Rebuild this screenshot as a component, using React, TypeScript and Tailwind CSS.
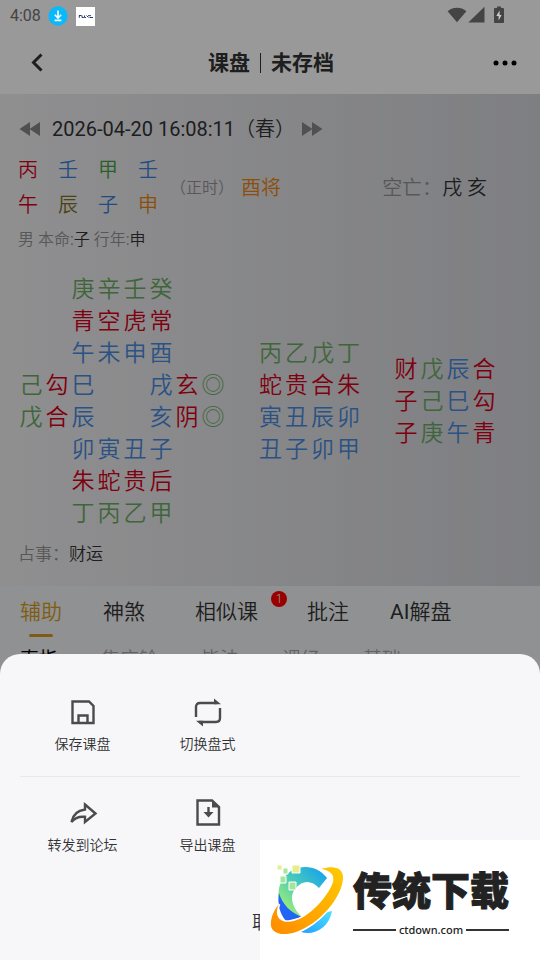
import { ReactNode } from "react";

const tone: Record<string, string> = {
  g: "text-[#6aab62]",
  r: "text-[#d4001a]",
  b: "text-[#4689dc]",
};

type Cell = [string, string];

const plate: Cell[][] = [
  [["", ""], ["", ""], ["庚", "g"], ["辛", "g"], ["壬", "g"], ["癸", "g"]],
  [["", ""], ["", ""], ["青", "r"], ["空", "r"], ["虎", "r"], ["常", "r"]],
  [["", ""], ["", ""], ["午", "b"], ["未", "b"], ["申", "b"], ["酉", "b"]],
  [["己", "g"], ["勾", "r"], ["巳", "b"], ["", ""], ["", ""], ["戌", "b"], ["玄", "r"], ["◎", "g"]],
  [["戊", "g"], ["合", "r"], ["辰", "b"], ["", ""], ["", ""], ["亥", "b"], ["阴", "r"], ["◎", "g"]],
  [["", ""], ["", ""], ["卯", "b"], ["寅", "b"], ["丑", "b"], ["子", "b"]],
  [["", ""], ["", ""], ["朱", "r"], ["蛇", "r"], ["贵", "r"], ["后", "r"]],
  [["", ""], ["", ""], ["丁", "g"], ["丙", "g"], ["乙", "g"], ["甲", "g"]],
];

const lessons: Cell[][] = [
  [["丙", "g"], ["乙", "g"], ["戊", "g"], ["丁", "g"]],
  [["蛇", "r"], ["贵", "r"], ["合", "r"], ["朱", "r"]],
  [["寅", "b"], ["丑", "b"], ["辰", "b"], ["卯", "b"]],
  [["丑", "b"], ["子", "b"], ["卯", "b"], ["甲", "b"]],
];

const passes: Cell[][] = [
  [["财", "r"], ["戊", "g"], ["辰", "b"], ["合", "r"]],
  [["子", "r"], ["己", "g"], ["巳", "b"], ["勾", "r"]],
  [["子", "r"], ["庚", "g"], ["午", "b"], ["青", "r"]],
];

const pillars = [
  { text: "丙", color: "text-[#d4001a]" },
  { text: "壬", color: "text-[#367fd8]" },
  { text: "甲", color: "text-[#46a044]" },
  { text: "壬", color: "text-[#367fd8]" },
  { text: "午", color: "text-[#d4001a]" },
  { text: "辰", color: "text-[#80701c]" },
  { text: "子", color: "text-[#367fd8]" },
  { text: "申", color: "text-[#e88410]" },
];

function Grid({ rows }: { rows: Cell[][] }) {
  return (
    <div className="text-[23px] leading-8">
      {rows.map((row, i) => (
        <div key={i} className="flex h-8">
          {row.map(([text, color], j) => (
            <span key={j} className={`w-[26px] text-center ${tone[color] ?? ""}`}>
              {text}
            </span>
          ))}
        </div>
      ))}
    </div>
  );
}

function StatusBar() {
  return (
    <div className="absolute inset-x-0 top-0 z-20 flex h-8 items-center pl-[10px] pr-[35px] font-normal text-[#444]">
      <span className="text-base">4:08</span>
      <svg className="ml-[7px] size-5" viewBox="0 0 20 20">
        <circle cx="10" cy="10" r="9.7" fill="#08b9fb" />
        <path d="M10 4.5v7M6.8 8.8l3.2 3.2 3.2-3.2M6.6 14.4h6.8" fill="none" stroke="#fff" strokeWidth="1.6" />
      </svg>
      <svg className="ml-2 size-[19px]" viewBox="0 0 19 19">
        <path d="M0 0h19v19H0z" fill="#fff" />
        <path d="M3 8.500h2.500M3.300 8.500v2.300M6 8.500v2h1.800M8.500 8.500v2h1.500M10.500 8.500l2 2M12 8.700h3M13.500 10.500h3.500" fill="none" stroke="#203b70" strokeWidth="1" />
      </svg>
      <div className="ml-auto flex items-center">
        <svg className="h-5 w-5" viewBox="0 0 20 20" fill="currentColor">
          <path d="M.6 5.200C6 .6 14 .6 19.400 5.200L10 16.200z" />
        </svg>
        <svg className="h-5 w-5" viewBox="0 0 20 20" fill="currentColor">
          <path d="M17.500 .8v15.700H1.300z" />
        </svg>
        <svg className="ml-1 h-5 w-[14px]" viewBox="0 0 14 20" fill="currentColor">
          <path d="M6 .5h4v1.500h2q1 0 1 1V16q0 1-1 1H4q-1 0-1-1V3q0-1 1-1h2z" />
          <path d="M8.600 4.500l-3.300 5.500h2.300v4.500L10.600 9H8.600z" fill="#ccc" />
        </svg>
      </div>
    </div>
  );
}

function Action({ label, children }: { label: string; children: ReactNode }) {
  return (
    <button className="flex flex-col items-center gap-1.5 text-[#4b4b4d]">
      <svg className="size-8" viewBox="0 0 32 32" fill="none" stroke="currentColor" strokeWidth="2.400">
        {children}
      </svg>
      <span className="text-sm leading-5 text-[#333]">{label}</span>
    </button>
  );
}

function Logo() {
  return (
    <svg className="h-[76px] w-[76px] shrink-0" viewBox="0 0 76 76">
      <defs>
        <linearGradient id="arc" x1="0" y1="1" x2="1" y2="0">
          <stop offset="0.1" stopColor="#a8f36d" />
          <stop offset=".5" stopColor="#4bcbb8" />
          <stop offset="1" stopColor="#0e9df5" />
        </linearGradient>
        <linearGradient id="ring" x1="0" y1="1" x2="1" y2="0">
          <stop offset="0" stopColor="#ff8a00" />
          <stop offset="1" stopColor="#ffcb00" />
        </linearGradient>
        <linearGradient id="tail" x1="0" y1="1" x2="1" y2="0">
          <stop offset="0" stopColor="#1fa0ff" />
          <stop offset="1" stopColor="#4de0ff" />
        </linearGradient>
      </defs>
      <path d="M58 16C49 4 34 2 22 9C12 15 8 27 10 36C13 48 21 55 33 55C24 47 19 34 27 26C33 18 43 18 50 26z" fill="url(#arc)" />
      <path d="M10 31C8 42 11 52 17 59L33 55C22 51 13 42 10 31z" fill="#2264f5" />
      <path d="M32 70C45 74 60 66 63 49C56 50 52 54 48 59C43 64 38 67 32 70z" fill="url(#tail)" />
      <path
        d="M52 7C64 3 75 5 74 17C72 37 50 62 27 70C12 75 0 71 2 59C3 52 6 47 10 42C6 50 8 57 14 59C31 65 58 38 64 20C66 13 61 8 52 7z"
        fill="url(#ring)"
        stroke="#fff"
        strokeWidth="3"
        paintOrder="stroke"
      />
      <g stroke="#fff" strokeWidth="1">
        <path d="M23 3h8v8h-8z" fill="#e6ed8d" />
        <path d="M8 3h5v5H8z" fill="#e6ed8d" />
        <path d="M14 6h5v6h-5z" fill="#abe697" />
        <path d="M11 14h6v7h-6z" fill="#a5e49b" />
        <path d="M20 20h7v8h-7z" fill="#a5e49b" />
      </g>
    </svg>
  );
}

export default function App() {
  return (
    <div className="relative flex min-h-screen flex-col overflow-hidden bg-[#f1f2f4] font-[Roboto,'Noto_Sans_CJK_SC',sans-serif] font-[350] text-[#333]">
      <StatusBar />

      <header className="flex h-[94px] items-center justify-between bg-white px-[22px] pt-8">
        <button aria-label="返回">
          <svg className="size-8" viewBox="0 0 32 32" fill="none" stroke="#333" strokeWidth="3">
            <path d="M19.500 7.500L11.500 15.500l8 8" />
          </svg>
        </button>
        <h1 className="flex items-center gap-[10px] text-[21px] font-bold leading-8">
          课盘
          <span className="h-5 w-px bg-[#333]" />
          未存档
        </h1>
        <button aria-label="更多">
          <svg className="h-8 w-[30px]" viewBox="0 0 30 32" fill="#000">
            <circle cx="8" cy="16" r="2.500" />
            <circle cx="17" cy="16" r="2.500" />
            <circle cx="26" cy="16" r="2.500" />
          </svg>
        </button>
      </header>

      <section className="h-[492px] bg-linear-to-r from-[#efeff1] to-[#d3d4da] px-[18px] pt-5">
        <div className="flex h-[30px] items-center">
          <button aria-label="上一时辰">
            <svg className="h-4 w-6" viewBox="0 0 24 16" fill="#858585">
              <path d="M12 1v14L1.500 8zM22 1v14L11.500 8z" />
            </svg>
          </button>
          <span className="ml-[10px] whitespace-nowrap text-xl">
            <span className="font-normal">2026-04-20 16:08:11</span>（春）
          </span>
          <button className="ml-[5px]" aria-label="下一时辰">
            <svg className="h-4 w-6" viewBox="0 0 24 16" fill="#858585">
              <path d="M2 1v14l10.500-7zM12 1v14l10.500-7z" />
            </svg>
          </button>
        </div>

        <div className="mt-[9px] flex items-center">
          <div className="grid grid-cols-4 text-xl leading-[35px]">
            {pillars.map((p, i) => (
              <span key={i} className={`w-10 ${p.color}`}>
                {p.text}
              </span>
            ))}
          </div>
          <span className="-ml-2 w-[71px] whitespace-nowrap text-base text-[#929292]">（正时）</span>
          <span className="text-xl text-[#e88410]">酉将</span>
          <p className="ml-auto mr-[35px] whitespace-nowrap text-xl text-[#929292]">
            空亡：<span className="text-[#333]">戌 亥</span>
          </p>
        </div>

        <p className="mt-[5px] text-base leading-6 text-[#929292]">
          男 本命<span className="font-normal">:</span>
          <span className="text-[#333]">子</span> 行年<span className="font-normal">:</span>
          <span className="text-[#333]">申</span>
        </p>

        <div className="mt-[22px] flex items-center justify-between pr-[25px]">
          <Grid rows={plate} />
          <Grid rows={lessons} />
          <Grid rows={passes} />
        </div>

        <p className="mt-3 text-[17px] leading-6 text-[#929292]">
          占事：<span className="text-[#333]">财运</span>
        </p>
      </section>

      <nav className="flex h-[52px] text-[21px] leading-[52px]">
        <a href="#assist" className="ml-5 flex flex-col items-center text-[#d49a22]">
          <span className="h-12">辅助</span>
          <span className="h-[3px] w-6 rounded-full bg-[#d49a22]" />
        </a>
        <a href="#gods" className="ml-[41px]">神煞</a>
        <a href="#similar" className="relative ml-[50px]">
          相似课
          <span className="absolute -right-[29px] top-[5px] size-4 rounded-full bg-[#ff0000] text-center text-xs leading-4 text-white">1</span>
        </a>
        <a href="#notes" className="ml-[49px]">批注</a>
        <a href="#ai" className="ml-[41px]">
          <span className="font-normal">AI</span>解盘
        </a>
      </nav>
      <div className="flex gap-[43px] px-5 pt-2 text-[19px] leading-7 text-[#a5a5a5]">
        <a href="#direct" className="font-normal text-black">直指</a>
        <a href="#poem">集应铃</a>
        <a href="#bifa">毕法</a>
        <a href="#kejing">课经</a>
        <a href="#basic">基础</a>
      </div>

      <div className="absolute inset-0 z-10 bg-black/40" />

      <div role="dialog" aria-label="课盘操作" className="absolute inset-x-0 bottom-0 z-20 rounded-t-[20px] bg-[#f7f7fa] px-5 pb-[21px] pt-[42px]">
        <div className="grid grid-cols-4 border-b border-[#e8e8eb] pb-[22px]">
          <Action label="保存课盘">
            <path d="M5.500 5.500H22l4.500 4.500V27h-21zM11.500 27v-7.500h9V27" />
          </Action>
          <Action label="切换盘式">
            <path d="M4 21V11q0-4 4-4h17M28 12v10q0 4-4 4H7" />
            <path d="M22 2.500l7 5.700h-7zM11 30.500l-7-5.700h7z" fill="currentColor" stroke="none" />
          </Action>
        </div>
        <div className="grid grid-cols-4 pt-5">
          <Action label="转发到论坛">
            <path d="M18 7.500L28.500 16.500 18 25v-5.200Q9 19 4.500 25 6.500 14 18 12.500z" strokeWidth="2.400" />
          </Action>
          <Action label="导出课盘">
            <path d="M5.500 3.500H20l7 6.500v17.500H5.500z" />
            <path d="M20 2.500l8 8h-8z" fill="currentColor" stroke="none" />
            <path d="M16.500 10v7" />
            <path d="M11.500 15h10l-5 5.500z" fill="currentColor" stroke="none" />
          </Action>
        </div>
        <button className="mx-auto mt-[52px] block text-lg leading-8">取消</button>
      </div>

      <div className="absolute bottom-0 right-0 z-30 flex h-[120px] w-[280px] items-center gap-2 bg-white pl-[9px]">
        <Logo />
        <div className="flex flex-col items-center pt-1 text-[#222]">
          <span className="whitespace-nowrap text-[39px] font-black leading-[52px] [-webkit-text-stroke:1px_#222]">传统下载</span>
          <div className="mt-1 flex w-full items-center gap-[3px]">
            <span className="h-[2px] flex-1 bg-[#333]" />
            <span className="font-['Noto_Sans',sans-serif] text-[11px] font-medium leading-4">ctdown.com</span>
            <span className="h-[2px] flex-1 bg-[#333]" />
          </div>
        </div>
      </div>
    </div>
  );
}
